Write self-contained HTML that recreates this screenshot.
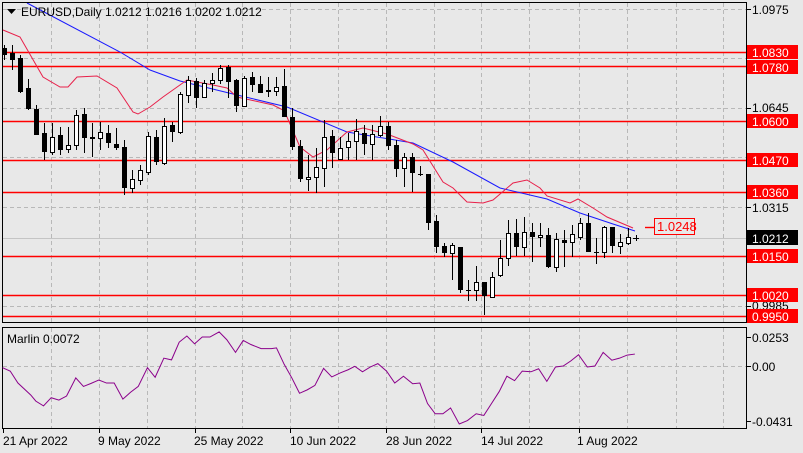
<!DOCTYPE html>
<html><head><meta charset="utf-8"><style>
html,body{margin:0;padding:0;background:#e8e8e8;}
svg{display:block;font-family:"Liberation Sans","DejaVu Sans",sans-serif;font-size:12px;}
</style></head><body>
<svg width="803" height="453" viewBox="0 0 803 453" xmlns="http://www.w3.org/2000/svg">
<rect width="803" height="453" fill="#e8e8e8"/>
<!-- grid main -->
<g stroke="#b8b8b8" stroke-dasharray="4,3" stroke-width="1">
<path d="M3 9.5H746M3 58.5H746M3 108.5H746M3 157.5H746M3 207.5H746M3 256.5H746M3 306.5H746"/>
<path d="M51.5 3V322M99.5 3V322M147.5 3V322M195.5 3V322M242.5 3V322M290.5 3V322M338.5 3V322M386.5 3V322M434.5 3V322M481.5 3V322M529.5 3V322M579.5 3V322M627.5 3V322M676.5 3V322M723.5 3V322"/>
<path d="M51.5 328V428M99.5 328V428M147.5 328V428M195.5 328V428M242.5 328V428M290.5 328V428M338.5 328V428M386.5 328V428M434.5 328V428M481.5 328V428M529.5 328V428M579.5 328V428M627.5 328V428M676.5 328V428M723.5 328V428M3 366.5H746"/>
</g>
<path d="M3 238.5H746" stroke="#c4c4c4"/>
<!-- red levels -->
<g stroke="#ff0000" stroke-width="1.4">
<path d="M3 52.5H746M3 66.5H746M3 121.5H746M3 160.5H746M3 192.5H746M3 256.5H746M3 295.5H746M3 316.5H746"/>
<path d="M645 227.5H655"/>
</g>
<rect x="654.5" y="218.5" width="40" height="16" fill="#e8e8e8" stroke="#ff0000"/>
<text x="657" y="231" fill="#ff0000" font-size="13">1.0248</text>
<!-- MAs -->
<polyline fill="none" stroke="#1a1aff" stroke-width="1" points="27,3 120,52 150,70 180,81 233,94 287,107 347,132 413,143 453,162 500,188 547,199 580,213 613,224 635,231"/>
<polyline fill="none" stroke="#e8204a" stroke-width="1" points="3,30 20,37 43,77 60,87 68,87 77,77 97,76 117,88 133,112 138,114 150,107 163,97 187,80 213,85 227,88 237,97 273,105 283,110 287,117 300,147 313,157 327,150 347,132 363,128 387,134 413,144 423,150 443,182 453,188 467,202 483,203 493,200 513,183 527,180 540,188 547,196 570,203 578,199 593,208 607,217 633,228"/>
<!-- wicks -->
<path stroke="#000" stroke-width="1" fill="none" d="M4.5 45V60M12.5 45V70M20.5 55V93M28.5 79V110M36.5 105V135M44.5 123V160M52.5 123V155M60.5 127V155M68.5 127V153M76.5 110V150M84.5 108V153M92.5 123V157M100.5 122V150M108.5 125V148M116.5 128V150M124.5 140V195M132.5 170V193M140.5 165V185M148.5 132V175M156.5 130V165M164.5 118V165M172.5 122V142M180.5 92V134M188.5 76V103M196.5 78V108M204.5 80V98M212.5 73V92M220.5 65V84M228.5 65V98M236.5 79V112M244.5 76V107M252.5 72V92M260.5 76V93M268.5 77V97M276.5 77V96M284.5 69V117M292.5 108V150M300.5 140V182M308.5 155V191M316.5 148V193M324.5 120V187M332.5 130V168M340.5 137V160M348.5 133V160M356.5 119V160M364.5 125V155M372.5 125V160M380.5 116V137M388.5 122V150M396.5 140V177M404.5 153V187M412.5 153V192M420.5 166V176M428.5 174V230M436.5 215V253M444.5 243V257M452.5 243V280M460.5 247V293M468.5 280V301M476.5 266V301M484.5 282V315M492.5 272V298M500.5 240V277M508.5 220V266M516.5 219V256M524.5 217V256M532.5 223V262M540.5 223V247M548.5 228V268M556.5 233V272M564.5 230V267M572.5 225V257M580.5 218V240M588.5 213V252M596.5 238V264M604.5 226V258M612.5 227V253M620.5 234V254M628.5 228V245M636.5 235V241"/>
<!-- doji ticks -->
<path stroke="#000" stroke-width="1" d="M418 174.5H423M466 290.5H471M594 252.5H599M633 238.5H639"/>
<!-- black bodies -->
<g fill="#000">
<rect x="2" y="48" width="5" height="7"/><rect x="10" y="53" width="5" height="7"/><rect x="18" y="58" width="5" height="34"/><rect x="26" y="88" width="5" height="21"/><rect x="34" y="109" width="5" height="26"/><rect x="42" y="133" width="5" height="19"/><rect x="58" y="135" width="5" height="15"/><rect x="82" y="114" width="5" height="24"/><rect x="90" y="137" width="5" height="2"/><rect x="106" y="133" width="5" height="10"/><rect x="114" y="144" width="5" height="4"/><rect x="122" y="147" width="5" height="41"/><rect x="154" y="137" width="5" height="25"/><rect x="170" y="125" width="5" height="7"/><rect x="194" y="81" width="5" height="17"/><rect x="226" y="67" width="5" height="15"/><rect x="234" y="80" width="5" height="26"/><rect x="250" y="77" width="5" height="8"/><rect x="258" y="84" width="5" height="9"/><rect x="266" y="90" width="5" height="2"/><rect x="282" y="86" width="5" height="31"/><rect x="290" y="117" width="5" height="30"/><rect x="298" y="146" width="5" height="33"/><rect x="330" y="136" width="5" height="17"/><rect x="362" y="133" width="5" height="11"/><rect x="386" y="126" width="5" height="20"/><rect x="394" y="145" width="5" height="24"/><rect x="410" y="157" width="5" height="16"/><rect x="426" y="174" width="5" height="49"/><rect x="434" y="221" width="5" height="26"/><rect x="442" y="246" width="5" height="7"/><rect x="458" y="247" width="5" height="43"/><rect x="482" y="282" width="5" height="14"/><rect x="514" y="233" width="5" height="14"/><rect x="530" y="232" width="5" height="5"/><rect x="546" y="235" width="5" height="32"/><rect x="562" y="240" width="5" height="3"/><rect x="586" y="223" width="5" height="29"/><rect x="610" y="227" width="5" height="19"/>
</g>
<!-- white bodies -->
<g fill="#fff" stroke="#000" stroke-width="1">
<rect x="50.5" y="137.5" width="4" height="15"/><rect x="66.5" y="145.5" width="4" height="4"/><rect x="74.5" y="115.5" width="4" height="30"/><rect x="98.5" y="132.5" width="4" height="6"/><rect x="130.5" y="179.5" width="4" height="9"/><rect x="138.5" y="170.5" width="4" height="10"/><rect x="146.5" y="136.5" width="4" height="36"/><rect x="162.5" y="126.5" width="4" height="37"/><rect x="178.5" y="94.5" width="4" height="38"/><rect x="186.5" y="80.5" width="4" height="15"/><rect x="202.5" y="83.5" width="4" height="14"/><rect x="210.5" y="80.5" width="4" height="3"/><rect x="218.5" y="68.5" width="4" height="12"/><rect x="242.5" y="78.5" width="4" height="28"/><rect x="274.5" y="87.5" width="4" height="4"/><rect x="306.5" y="177.5" width="4" height="2"/><rect x="314.5" y="167.5" width="4" height="10"/><rect x="322.5" y="137.5" width="4" height="31"/><rect x="338.5" y="148.5" width="4" height="11"/><rect x="346.5" y="141.5" width="4" height="6"/><rect x="354.5" y="131.5" width="4" height="10"/><rect x="370.5" y="134.5" width="4" height="10"/><rect x="378.5" y="126.5" width="4" height="9"/><rect x="402.5" y="157.5" width="4" height="11"/><rect x="450.5" y="245.5" width="4" height="8"/><rect x="474.5" y="282.5" width="4" height="8"/><rect x="490.5" y="277.5" width="4" height="20"/><rect x="498.5" y="258.5" width="4" height="17"/><rect x="506.5" y="233.5" width="4" height="25"/><rect x="522.5" y="232.5" width="4" height="15"/><rect x="538.5" y="235.5" width="4" height="2"/><rect x="554.5" y="239.5" width="4" height="28"/><rect x="570.5" y="234.5" width="4" height="8"/><rect x="578.5" y="223.5" width="4" height="14"/><rect x="602.5" y="227.5" width="4" height="25"/><rect x="618.5" y="242.5" width="4" height="4"/><rect x="626.5" y="237.5" width="4" height="6"/>
</g>
<!-- frames -->
<rect x="2.5" y="2.5" width="744" height="320" fill="none" stroke="#000"/>
<rect x="2.5" y="327.5" width="744" height="101" fill="none" stroke="#000"/>
<!-- header -->
<path d="M7 9H16L11.5 14Z" fill="#000"/>
<text x="21" y="16" fill="#000">EURUSD,Daily  1.0212 1.0216 1.0202 1.0212</text>
<!-- axis ticks -->
<path stroke="#000" d="M747 9.5H751M747 108.5H751M747 207.5H751M747 306.5H751M747 337.5H751M747 366.5H751M747 421.5H751"/>
<g fill="#000">
<text x="752" y="14">1.0975</text>
<text x="752" y="112">1.0645</text>
<text x="752" y="212">1.0315</text>
<text x="752" y="310">0.9985</text>
</g>
<g fill="#ff0000">
<rect x="747" y="45" width="51" height="14"/><rect x="747" y="60" width="51" height="14"/><rect x="747" y="114" width="51" height="14"/><rect x="747" y="153" width="51" height="14"/><rect x="747" y="185" width="51" height="14"/><rect x="747" y="249" width="51" height="14"/><rect x="747" y="288" width="51" height="14"/><rect x="747" y="309" width="51" height="14"/>
</g>
<rect x="747" y="230" width="51" height="15" fill="#000"/>
<g fill="#fff">
<text x="752" y="57">1.0830</text><text x="752" y="72">1.0780</text><text x="752" y="126">1.0600</text><text x="752" y="165">1.0470</text><text x="752" y="197">1.0360</text><text x="752" y="243">1.0212</text><text x="752" y="261">1.0150</text><text x="752" y="300">1.0020</text><text x="752" y="321">0.9950</text>
</g>
<!-- lower panel -->
<text x="7" y="343" fill="#000">Marlin 0.0072</text>
<g fill="#000"><text x="752" y="342">0.0253</text><text x="752" y="371">0.00</text><text x="752" y="426">-0.0431</text></g>
<g transform="translate(0,366) scale(0.512,0.341) translate(0,-155)">
<polyline fill="none" stroke="#8b008b" stroke-width="1" vector-effect="non-scaling-stroke" points="5,160 20,170 35,205 60,240 70,258 85,272 100,248 115,255 130,243 148,190 163,215 178,206 193,196 208,205 223,205 240,252 255,232 270,215 288,160 303,188 320,132 335,137 350,85 365,67 380,90 395,70 410,70 428,55 443,78 460,115 475,80 490,92 510,104 530,104 540,102 555,150 570,190 585,235 600,225 615,212 632,162 648,187 665,175 680,166 693,156 708,172 723,158 738,148 755,170 771,205 788,185 806,207 820,205 835,265 850,295 865,295 880,278 897,325 913,315 930,295 945,300 960,265 975,230 990,185 1005,198 1020,170 1037,172 1052,163 1068,200 1085,158 1100,155 1115,140 1130,122 1147,158 1162,155 1178,115 1195,138 1210,132 1225,123 1240,120"/>
</g>
<!-- dates -->
<path stroke="#000" d="M3.5 429V433M99.5 429V433M195.5 429V433M290.5 429V433M386.5 429V433M481.5 429V433M579.5 429V433"/>
<g fill="#000">
<text x="3" y="445">21 Apr 2022</text><text x="98" y="445">9 May 2022</text><text x="194" y="445">25 May 2022</text><text x="290" y="445">10 Jun 2022</text><text x="386" y="445">28 Jun 2022</text><text x="481" y="445">14 Jul 2022</text><text x="577" y="445">1 Aug 2022</text>
</g>
</svg>
</body></html>
